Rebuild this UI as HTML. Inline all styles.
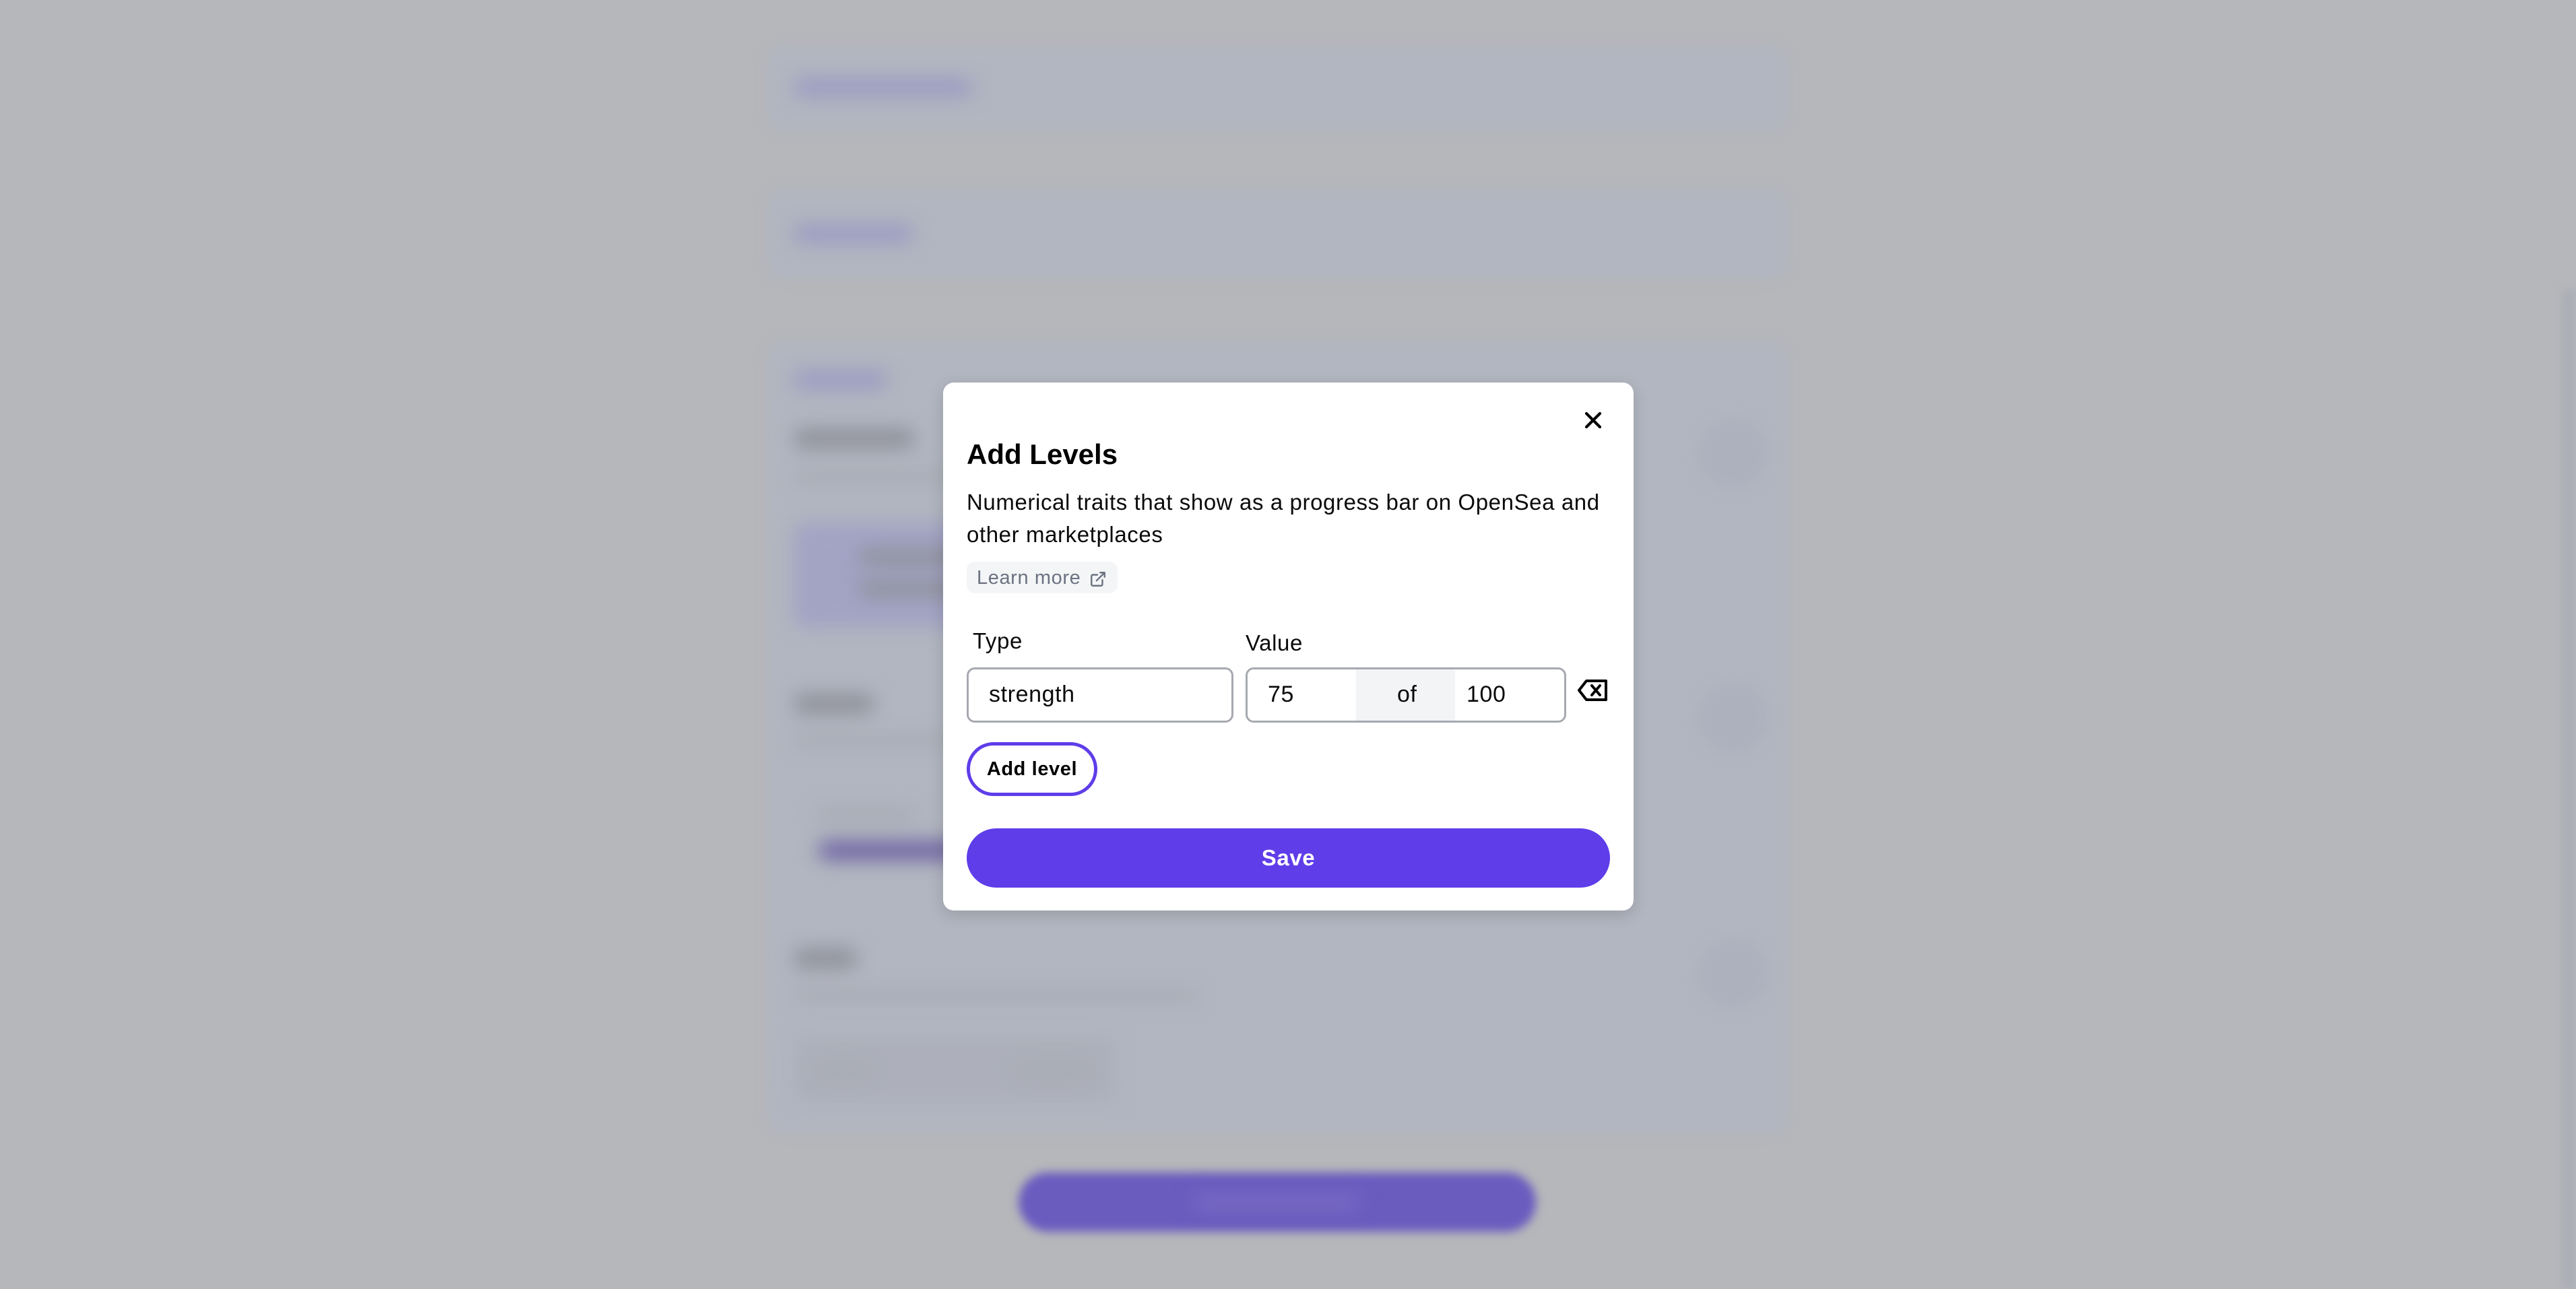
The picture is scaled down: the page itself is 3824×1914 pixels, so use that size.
<!DOCTYPE html>
<html><head><meta charset="utf-8"><style>
*{box-sizing:border-box;margin:0;padding:0}
body{width:3824px;height:1914px;overflow:hidden;background:#b6b7bb;font-family:"Liberation Sans",Arial,sans-serif;position:relative}
.b{position:absolute;filter:blur(14px)}
.card{position:absolute;left:1139px;width:1515px;background:#b2b6c0;border-radius:24px;filter:blur(8px)}
.pu{background:#9c9bc2;border-radius:14px}
.dk{background:#8f929b;border-radius:14px}
.lt{background:#a7aab3;border-radius:10px}
.circ{position:absolute;width:100px;height:100px;border-radius:50%;background:#adb0bd;filter:blur(10px)}
#modal{position:absolute;left:1400px;top:568px;width:1025px;height:784px;background:#fff;border-radius:16px;box-shadow:0 6px 24px rgba(0,0,0,.15)}
.a{position:absolute}
.t{letter-spacing:0.6px}
</style></head><body>
<div style="position:absolute;right:0;top:430px;width:20px;height:1484px;background:#abaeb5;filter:blur(6px)"></div>
<div class="card" style="top:68px;height:127px"></div>
<div class="card" style="top:280px;height:135px"></div>
<div class="card" style="top:507px;height:1176px"></div>
<div class="b pu" style="left:1178px;top:116px;width:266px;height:28px"></div>
<div class="b pu" style="left:1178px;top:333px;width:178px;height:28px"></div>
<div class="b pu" style="left:1178px;top:550px;width:139px;height:28px"></div>
<div class="b dk" style="left:1178px;top:636px;width:180px;height:30px"></div>
<div class="b lt" style="left:1178px;top:700px;width:260px;height:16px"></div>
<div class="b" style="left:1178px;top:776px;width:260px;height:156px;background:#a3a3c4;border-radius:16px"></div>
<div class="b dk" style="left:1275px;top:815px;width:160px;height:24px"></div>
<div class="b dk" style="left:1275px;top:862px;width:160px;height:24px"></div>
<div class="b dk" style="left:1178px;top:1030px;width:120px;height:30px"></div>
<div class="b lt" style="left:1178px;top:1092px;width:260px;height:16px"></div>
<div class="b lt" style="left:1210px;top:1200px;width:150px;height:18px"></div>
<div class="b" style="left:1215px;top:1250px;width:230px;height:26px;background:#6a5ea2;border-radius:14px"></div>
<div class="b dk" style="left:1178px;top:1408px;width:95px;height:30px"></div>
<div class="b lt" style="left:1178px;top:1470px;width:600px;height:16px"></div>
<div class="b" style="left:1178px;top:1537px;width:480px;height:102px;background:#adb0ba;border-radius:16px"></div>
<div class="b lt" style="left:1212px;top:1580px;width:80px;height:18px"></div>
<div class="b lt" style="left:1510px;top:1580px;width:110px;height:18px"></div>
<div class="circ" style="left:2523px;top:623px"></div>
<div class="circ" style="left:2523px;top:1016px"></div>
<div class="circ" style="left:2523px;top:1396px"></div>
<div class="b" style="left:1512px;top:1741px;width:768px;height:88px;background:#6a5bbf;border-radius:44px;filter:blur(7px)"></div>
<div class="b" style="left:1770px;top:1775px;width:250px;height:20px;background:#7a6ec2;border-radius:10px"></div>

<div id="modal">
 <svg class="a" style="left:953px;top:44px" width="24" height="24" viewBox="0 0 24 24"><path d="M2 2L22 22M22 2L2 22" stroke="#000" stroke-width="4.2" stroke-linecap="round"/></svg>
 <div class="a" style="left:35px;top:83px;font-size:42px;font-weight:700;color:#000">Add Levels</div>
 <div class="a t" style="left:35px;top:154px;width:975px;font-size:33px;line-height:48px;color:#0a0a0a">Numerical traits that show as a progress bar on OpenSea and other marketplaces</div>
 <div class="a" style="left:35px;top:266px;width:224px;height:47px;background:#f4f5f7;border-radius:12px"></div>
 <div class="a t" style="left:50px;top:272px;font-size:29px;line-height:36px;color:#6b7280">Learn more</div>
 <svg class="a" style="left:217px;top:279px" width="26" height="26" viewBox="0 0 24 24" fill="none" stroke="#6b7280" stroke-width="2.2" stroke-linecap="round" stroke-linejoin="round"><path d="M18 13v6a2 2 0 0 1-2 2H5a2 2 0 0 1-2-2V8a2 2 0 0 1 2-2h6"/><path d="M15 3h6v6M10 14L21 3"/></svg>
 <div class="a t" style="left:44px;top:365px;font-size:33px;color:#0a0a0a">Type</div>
 <div class="a t" style="left:449px;top:368px;font-size:33px;color:#0a0a0a">Value</div>
 <div class="a" style="left:35px;top:423px;width:396px;height:82px;border:3px solid #a7a9b1;border-radius:12px"></div>
 <div class="a t" style="left:68px;top:444px;font-size:34px;color:#0a0a0a">strength</div>
 <div class="a" style="left:449px;top:423px;width:476px;height:82px;border:3px solid #a7a9b1;border-radius:12px;overflow:hidden">
   <div class="a" style="left:161px;top:0;width:147px;height:100%;background:#f3f4f6"></div>
 </div>
 <div class="a t" style="left:482px;top:444px;font-size:34px;color:#0a0a0a">75</div>
 <div class="a t" style="left:674px;top:444px;font-size:34px;color:#0a0a0a">of</div>
 <div class="a t" style="left:777px;top:444px;font-size:34px;color:#0a0a0a">100</div>
 <svg class="a" style="left:942px;top:441px" width="44" height="32" viewBox="0 0 44 32" fill="none" stroke="#000" stroke-width="4" stroke-linejoin="round"><path d="M13 2H42V30H13L2 16Z"/><path d="M21 9L33 23M33 9L21 23" stroke-linecap="round"/></svg>
 <div class="a t" style="left:35px;top:534px;width:194px;height:80px;border:5px solid #5f3de9;border-radius:40px;font-size:29px;font-weight:700;line-height:70px;text-align:center;color:#000">Add level</div>
 <div class="a t" style="left:35px;top:662px;width:955px;height:88px;background:#5f3de9;border-radius:44px;font-size:33px;font-weight:700;line-height:88px;text-align:center;color:#fff">Save</div>
</div>
</body></html>
